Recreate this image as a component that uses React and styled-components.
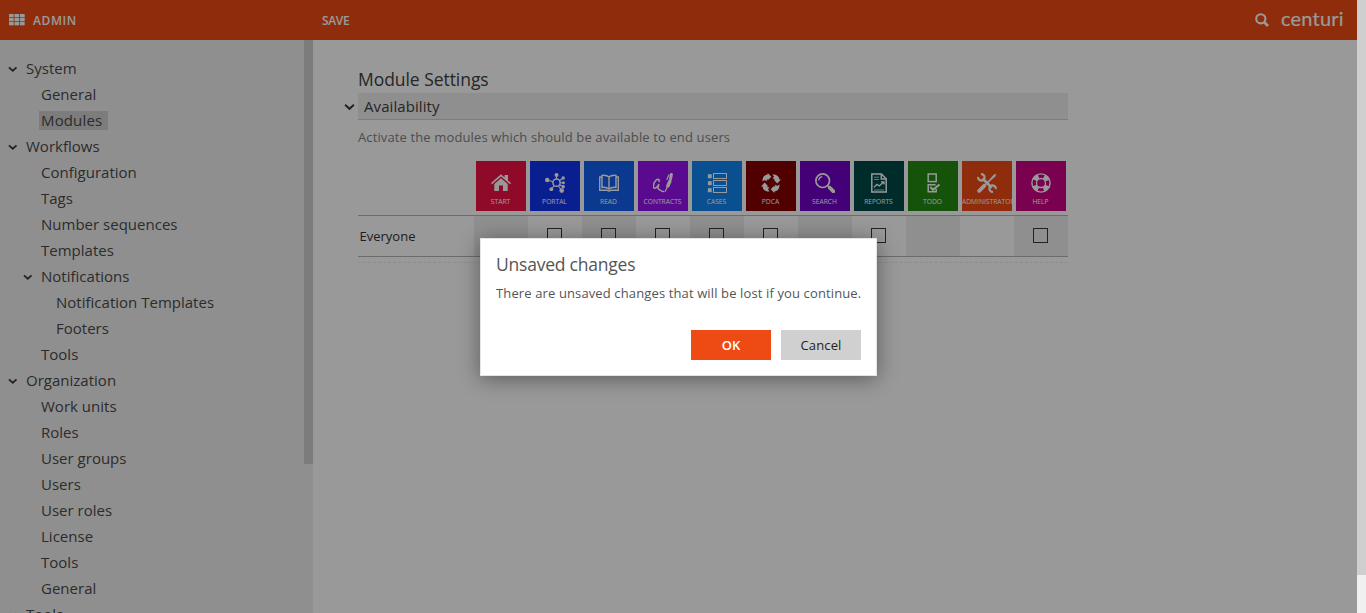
import React from "react";
import styled, { createGlobalStyle } from "styled-components";

const GlobalStyle = createGlobalStyle`
  * { box-sizing: border-box; }
  html, body { margin: 0; padding: 0; overflow: hidden; }
  body { font-family: "Open Sans", "Noto Sans", sans-serif; color: #4a4a4a; background: #fff; }
`;

const Window = styled.div`
  display: flex;
  width: 1366px;
  height: 613px;
  overflow: hidden;
`;

const Page = styled.div`
  position: relative;
  display: flex;
  flex-direction: column;
  width: 1357px;
  height: 613px;
  overflow: hidden;
`;

const PageScroll = styled.div`
  width: 9px;
  background: #f0f0f0;
`;

const ScrollThumb = styled.div`
  width: 9px;
  height: ${(p) => p.$height}px;
  background: #cfcfcf;
`;

const Header = styled.header`
  flex: none;
  display: flex;
  align-items: center;
  height: 40px;
  padding-right: 12px;
  background: #ee4a13;
  color: #fff;
`;

const Brand = styled.div`
  display: flex;
  align-items: center;
  width: 322px;
  padding-left: 9px;
  gap: 8px;
  font-size: 12px;
  line-height: 40px;
  letter-spacing: 0.6px;
  font-weight: 600;
`;

const BrandName = styled.span`
  padding-top: 1px;
`;

const Command = styled.span`
  flex: 1;
  font-size: 12px;
  line-height: 41px;
  letter-spacing: -0.35px;
  font-weight: 600;
`;

const Logo = styled.span`
  width: 76px;
  padding: 0 0 4px 12px;
  font-family: Lato, sans-serif;
  font-size: 20px;
  line-height: 36px;
  letter-spacing: 0.2px;
  -webkit-text-stroke: 0.15px #fff;
`;

const Body = styled.div`
  flex: 1;
  display: flex;
  min-height: 0;
`;

const Sidebar = styled.aside`
  flex: none;
  display: flex;
  width: 313px;
  background: #efefef;
`;

const Tree = styled.nav`
  flex: 1;
  padding-top: 15px;
  overflow: hidden;
`;

const TreeRow = styled.div`
  display: flex;
  align-items: center;
  height: 26px;
  padding-left: ${(p) => 8 + p.$level * 15}px;
`;

const TreeToggle = styled.span`
  display: flex;
  width: 16px;
  padding-top: 1px;
`;

const TreeLabel = styled.span`
  padding: 0 ${(p) => (p.$active ? 6 : 2)}px 0 2px;
  background: ${(p) => (p.$active ? "#cfcfcf" : "transparent")};
  font-size: 15px;
  line-height: 19px;
  letter-spacing: ${(p) => (p.$active ? 0.14 : 0.01)}px;
  white-space: nowrap;
`;

const Main = styled.main`
  flex: 1;
  padding: 26px 0 0 45px;
`;

const Title = styled.h1`
  margin: 0;
  font-size: 17.5px;
  font-weight: 400;
  line-height: 27px;
  letter-spacing: -0.05px;
  color: #404040;
`;

const Section = styled.div`
  display: flex;
  align-items: center;
  width: 724px;
  margin-left: -14px;
`;

const SectionHeading = styled.div`
  flex: 1;
  height: 27px;
  margin-left: 3px;
  padding-left: 6px;
  border-bottom: 1px solid #cfcfcf;
  background: #efefef;
  font-size: 15px;
  line-height: 26px;
  letter-spacing: 0.08px;
  color: #404040;
`;

const Hint = styled.p`
  margin: 0;
  height: 41px;
  font-size: 13px;
  line-height: 35px;
  letter-spacing: 0.125px;
  color: #828282;
`;

const ModuleRow = styled.div`
  display: flex;
  gap: 4px;
  width: 710px;
  height: 55px;
  padding-left: 118px;
  border-bottom: 1px solid #b4b4b4;
`;

const Tile = styled.div`
  display: flex;
  flex-direction: column;
  align-items: ${(p) => (p.$wide ? "flex-start" : "center")};
  width: 50px;
  height: 50px;
  padding-top: 12px;
  overflow: hidden;
  background: ${(p) => p.$color};
  color: #fff;
  svg { flex: none; align-self: center; }
`;

const TileLabel = styled.span`
  padding-right: 1px;
  font-size: 6.7px;
  font-weight: 500;
  line-height: 18px;
  white-space: nowrap;
`;

const GroupRow = styled.div`
  display: flex;
  width: 710px;
  height: 41px;
  border-bottom: 1px solid #b4b4b4;
`;

const GroupName = styled.div`
  width: 116px;
  padding-left: 1.5px;
  font-size: 13px;
  line-height: 40px;
  color: #333;
`;

const Cell = styled.div`
  display: flex;
  align-items: center;
  justify-content: center;
  width: 54px;
  background: ${(p) => (p.$shaded ? "#efefef" : "transparent")};
`;

const Checkbox = styled.span`
  width: 15px;
  height: 15px;
  margin-right: 1px;
  margin-bottom: 1px;
  border: 1px solid #3a3a3a;
`;

const Divider = styled.div`
  width: 710px;
  height: 6px;
  border-bottom: 1px dashed #ececec;
`;

const Overlay = styled.div`
  position: absolute;
  inset: 0;
  background: rgba(0, 0, 0, 0.4);
`;

const Dialog = styled.section`
  position: absolute;
  top: 238px;
  left: 480px;
  display: flex;
  flex-direction: column;
  width: 397px;
  height: 138px;
  padding: 12px 15px 15px;
  border: 1px solid #e4e4e4;
  background: #fff;
  box-shadow: 0 3px 20px rgba(0, 0, 0, 0.4);
`;

const DialogTitle = styled.h2`
  margin: 0;
  font-size: 17.5px;
  font-weight: 400;
  line-height: 26px;
  letter-spacing: -0.22px;
  color: #555;
`;

const DialogText = styled.p`
  flex: 1;
  margin: 0;
  font-size: 13px;
  line-height: 32px;
  letter-spacing: 0.125px;
  white-space: nowrap;
  color: #555;
`;

const Actions = styled.div`
  display: flex;
  justify-content: flex-end;
  gap: 10px;
`;

const Button = styled.button`
  width: 80px;
  height: 30px;
  padding: 0;
  border: 0;
  background: ${(p) => (p.$primary ? "#ee4a13" : "#d0d0d0")};
  color: ${(p) => (p.$primary ? "#fff" : "#222")};
  font-family: inherit;
  font-size: 13px;
  font-weight: ${(p) => (p.$primary ? 600 : 400)};
  line-height: 30px;
  letter-spacing: ${(p) => (p.$primary ? 0 : 0.15)}px;
`;

const Chevron = ({ size = 9.5 }) => (
  <svg width={size} height={size} viewBox="0 0 10 10" fill="none" stroke="#3a3a3a" strokeWidth="1.8">
    <path d="M1 3.5 5 7.1 9 3.5" />
  </svg>
);

const GridIcon = () => (
  <svg width="16" height="12" viewBox="0 0 16 12" fill="#fff">
    {[0, 4, 8].map((y) =>
      [0, 5.5, 11].map((x) => <rect key={`${x}-${y}`} x={x} y={y} width="4.7" height="3.3" />)
    )}
  </svg>
);

const SearchIcon = () => (
  <svg width="14" height="14" viewBox="0 0 14 14" fill="none" stroke="#fff">
    <circle cx="5.8" cy="5.8" r="4.6" strokeWidth="2.1" />
    <path d="M9 9 13 13" strokeWidth="2.6" />
  </svg>
);

const icons = {
  start: (
    <g fill="currentColor">
      <path d="M0 10 10 1.2 13.6 4.4V2H17V7.4L20 10 19 11.3 10 3.5 1 11.3Z" />
      <path d="M3.3 11 10 5.2 16.7 11V18H12V12.5H8V18H3.3Z" />
    </g>
  ),
  portal: (
    <g>
      <path
        d="M11.5 9.7V2M11.5 9.7 2 7M11.5 9.7 18.2 5M11.5 9.7H18M11.5 9.7 18 13.7M11.5 9.7 6.5 16M11.5 9.7 16.5 17.5"
        stroke="currentColor"
        strokeWidth="1.1"
      />
      <circle cx="11.5" cy="9.7" r="3.6" fill="#1234ee" stroke="currentColor" strokeWidth="1.5" />
      <g fill="currentColor">
        <circle cx="11.5" cy="2" r="2" />
        <circle cx="2.2" cy="7" r="2.2" />
        <circle cx="18.2" cy="5" r="1.7" />
        <circle cx="18.4" cy="9.7" r="1.5" />
        <circle cx="18.2" cy="13.8" r="1.7" />
        <circle cx="6.3" cy="16.2" r="1.9" />
        <circle cx="16.7" cy="17.6" r="2.3" />
      </g>
    </g>
  ),
  read: (
    <g fill="none" stroke="currentColor" strokeWidth="1.4">
      <path d="M10 4C8 2.2 5.5 2 3 2.4V14.5C5.5 14 8 14.5 10 16 12 14.5 14.5 14 17 14.5V2.4C14.5 2 12 2.2 10 4ZM10 4V16" />
      <path d="M3 4H.7V17.3H8L10 18 12 17.3H19.3V4H17" />
    </g>
  ),
  contracts: (
    <g stroke="currentColor" fill="none" strokeLinecap="round">
      <path
        d="M6 8.4C7 5.6 4 5.6 2 8.4 0 11.6-.2 15.6 2 15.3 4 15 5 12.4 6 11.2 5.2 13.6 4.2 16 6.2 16.6 8 17 8 18.8 10.8 18.6"
        strokeWidth="1.5"
      />
      <path d="M18.4 1.4 17.6 5.6" strokeWidth="3" />
      <path d="M17 8 14.8 13" strokeWidth="3.4" />
      <path d="M14.2 14 12.3 18.3M16 1.8 13.8 6.4" strokeWidth="1.2" />
    </g>
  ),
  cases: (
    <g>
      {[0.8, 7.8, 14.8].map((y) => (
        <g key={y}>
          <rect x="0.9" y={y + 0.4} width="3.8" height="4" fill="currentColor" />
          <rect x="6.5" y={y - 0.3} width="13" height="5" fill="none" stroke="currentColor" strokeWidth="1" />
        </g>
      ))}
    </g>
  ),
  pdca: (
    <g fill="currentColor">
      {[0, 90, 180, 270].map((a) => (
        <path key={a} transform={`rotate(${a} 10 10)`} d="M1.5 8.6C1.3 4.5 3.3 1.9 6.6 1.6V0L10.4 3.7 6.6 7.4V5.9C5.8 6.3 5.6 7 5.8 8.6L3.8 7Z" />
      ))}
    </g>
  ),
  search: (
    <g fill="none" stroke="currentColor">
      <circle cx="7.7" cy="7.7" r="6.8" strokeWidth="1.7" />
      <path d="M3.7 7.5C3.9 5.5 5.2 4 7.2 3.7" strokeWidth="1.2" />
      <path d="M12.7 12.7 15 15" strokeWidth="1.8" />
      <path d="M14.8 14.8 18.4 18.4" strokeWidth="3.7" strokeLinecap="round" />
    </g>
  ),
  reports: (
    <g fill="none" stroke="currentColor">
      <path d="M2.8 1H12.5L17.2 5.7V19H2.8ZM12.3 1V6H17" strokeWidth="1.5" />
      <path d="M5 4.2H10M5 6.5H10M5 17H15" strokeWidth="1" opacity="0.7" />
      <path d="M5 14.3 8 11.3 10.3 13 14.5 9M12 8.8H15V11.5" strokeWidth="1.3" />
    </g>
  ),
  todo: (
    <g fill="none" stroke="currentColor" strokeWidth="1.5">
      <rect x="5.2" y="1" width="8" height="7.6" />
      <path d="M13.2 16V18.8H5.2V11.7H12.6" />
      <path d="M7.4 14 10 16.8 16.5 11.5" strokeWidth="2" />
    </g>
  ),
  administrator: (
    <g fill="none" stroke="currentColor">
      <path d="M5.5 5.5 14.8 14.8" strokeWidth="2.7" />
      <path d="M4 1.2A3.2 3.2 0 1 1 1.2 4M16 18.8A3.2 3.2 0 1 1 18.8 16" strokeWidth="2.2" />
      <path d="M19.4 .8 16.6 1.7 12.4 6.6 13.5 7.7 18.4 3.4Z" fill="currentColor" stroke="none" />
      <path d="M13 7.2 7.8 12.2" strokeWidth="1.7" />
      <path d="M7.2 12.8 2.2 17.8" strokeWidth="3.8" strokeLinecap="round" />
    </g>
  ),
  help: (
    <g fill="none" stroke="currentColor">
      <circle cx="10" cy="10" r="9.1" strokeWidth="1.4" />
      <circle cx="10" cy="10" r="4.5" strokeWidth="1.3" />
      <circle cx="10" cy="10" r="6.9" strokeWidth="4.3" strokeDasharray="5.42 5.42" strokeDashoffset="-2.71" />
    </g>
  ),
};

const modules = [
  { id: "start", label: "START", color: "#ee1244", box: false },
  { id: "portal", label: "PORTAL", color: "#1234ee", box: true },
  { id: "read", label: "READ", color: "#1160ee", box: true },
  { id: "contracts", label: "CONTRACTS", color: "#9611ee", box: true },
  { id: "cases", label: "CASES", color: "#1184ee", box: true },
  { id: "pdca", label: "PDCA", color: "#850000", box: true },
  { id: "search", label: "SEARCH", color: "#7200c6", box: false },
  { id: "reports", label: "REPORTS", color: "#004848", box: true },
  { id: "todo", label: "TODO", color: "#238a11", box: false },
  { id: "administrator", label: "ADMINISTRATOR", color: "#ee4a13", box: false, wide: true },
  { id: "help", label: "HELP", color: "#cc0085", box: true },
];

const tree = [
  [0, "System", true],
  [1, "General"],
  [1, "Modules", false, true],
  [0, "Workflows", true],
  [1, "Configuration"],
  [1, "Tags"],
  [1, "Number sequences"],
  [1, "Templates"],
  [1, "Notifications", true],
  [2, "Notification Templates"],
  [2, "Footers"],
  [1, "Tools"],
  [0, "Organization", true],
  [1, "Work units"],
  [1, "Roles"],
  [1, "User groups"],
  [1, "Users"],
  [1, "User roles"],
  [1, "License"],
  [1, "Tools"],
  [1, "General"],
  [0, "Tools", true],
];

export default function App() {
  return (
    <Window>
      <GlobalStyle />
      <Page>
        <Header>
          <Brand>
            <GridIcon />
            <BrandName>ADMIN</BrandName>
          </Brand>
          <Command>SAVE</Command>
          <SearchIcon />
          <Logo>centuri</Logo>
        </Header>
        <Body>
          <Sidebar>
            <Tree>
              {tree.map(([level, label, open, active], i) => (
                <TreeRow key={i} $level={level}>
                  <TreeToggle>{open && <Chevron />}</TreeToggle>
                  <TreeLabel $active={active}>{label}</TreeLabel>
                </TreeRow>
              ))}
            </Tree>
            <ScrollThumb $height={424} />
          </Sidebar>
          <Main>
            <Title>Module Settings</Title>
            <Section>
              <Chevron size={11} />
              <SectionHeading>Availability</SectionHeading>
            </Section>
            <Hint>Activate the modules which should be available to end users</Hint>
            <ModuleRow>
              {modules.map((m) => (
                <Tile key={m.id} $color={m.color} $wide={m.wide}>
                  <svg width="20" height="20" viewBox="0 0 20 20">{icons[m.id]}</svg>
                  <TileLabel>{m.label}</TileLabel>
                </Tile>
              ))}
            </ModuleRow>
            <GroupRow>
              <GroupName>Everyone</GroupName>
              {modules.map((m, i) => (
                <Cell key={m.id} $shaded={i % 2 === 0}>{m.box && <Checkbox />}</Cell>
              ))}
            </GroupRow>
            <Divider />
          </Main>
        </Body>
        <Overlay />
        <Dialog>
          <DialogTitle>Unsaved changes</DialogTitle>
          <DialogText>There are unsaved changes that will be lost if you continue.</DialogText>
          <Actions>
            <Button $primary>OK</Button>
            <Button>Cancel</Button>
          </Actions>
        </Dialog>
      </Page>
      <PageScroll>
        <ScrollThumb $height={575} />
      </PageScroll>
    </Window>
  );
}
